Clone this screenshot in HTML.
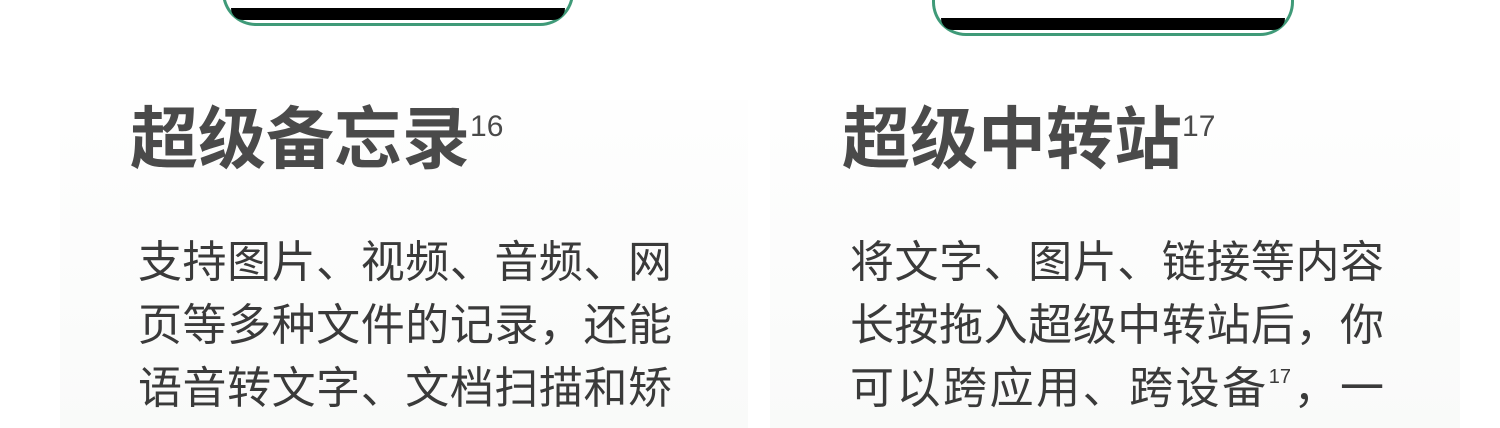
<!DOCTYPE html>
<html><head><meta charset="utf-8"><style>
body{margin:0;width:1500px;height:428px;overflow:hidden;background:#fff;position:relative;font-family:"Liberation Sans","Noto Sans CJK SC",sans-serif;}
.panel{position:absolute;top:100px;height:328px;background:linear-gradient(#fefefe,#f9faf9);}
.phone{position:absolute;border:3px solid #3f9a78;border-top:none;border-radius:0 0 34px 34px;background:#fff;box-sizing:border-box;}
.phone::after{content:"";position:absolute;left:6px;right:6px;bottom:3px;height:12px;background:#000;border-radius:0 0 28px 28px;}
.title{position:absolute;font-size:68px;font-weight:bold;color:#4a4a4a;line-height:1;}
.title sup{font-size:30px;font-weight:normal;vertical-align:top;position:relative;top:6px;margin-left:0px;}
.line{position:absolute;font-size:44px;color:#3a3a3a;line-height:1;width:534px;text-align:justify;text-align-last:justify;white-space:nowrap;}
.line sup{font-size:20px;vertical-align:top;}
</style></head><body>
<div class="panel" style="left:60px;width:688px"></div>
<div class="panel" style="left:770px;width:690px"></div>
<div class="phone" style="left:222px;top:-20px;width:352px;height:46px"></div>
<div class="phone" style="left:932px;top:-10px;width:362px;height:46px"></div>
<div class="title" style="left:130px;top:106px">超级备忘录<sup>16</sup></div>
<div class="title" style="left:842px;top:106px">超级中转站<sup>17</sup></div>
<div class="line" style="left:138px;top:241px">支持图片、视频、音频、网</div>
<div class="line" style="left:138px;top:304px">页等多种文件的记录，还能</div>
<div class="line" style="left:138px;top:367px">语音转文字、文档扫描和矫</div>
<div class="line" style="left:850px;top:241px">将文字、图片、链接等内容</div>
<div class="line" style="left:850px;top:304px">长按拖入超级中转站后，你</div>
<div class="line" style="left:850px;top:367px">可以跨应用、跨设备<sup>17</sup>，一</div>
</body></html>
